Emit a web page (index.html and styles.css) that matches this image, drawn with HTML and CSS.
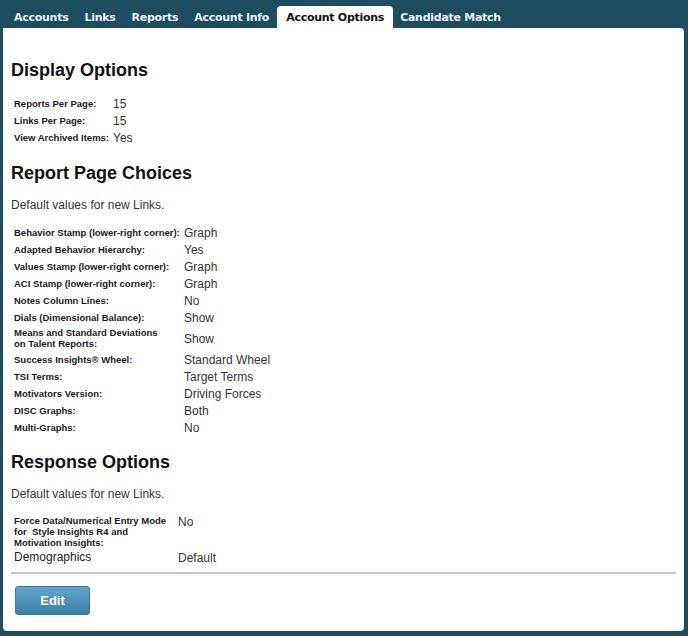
FILE: index.html
```html
<!DOCTYPE html>
<html>
<head>
<meta charset="utf-8">
<link rel="stylesheet" href="styles.css">
</head>
<body>
<nav class="tabs">
  <span class="tab">Accounts</span>
  <span class="tab">Links</span>
  <span class="tab">Reports</span>
  <span class="tab">Account Info</span>
  <span class="tab active">Account Options</span>
  <span class="tab">Candidate Match</span>
</nav>
<main class="panel">
  <h2 class="h first">Display Options</h2>
  <div class="opts display">
    <div class="row"><span class="lbl">Reports Per Page:</span><span class="val">15</span></div>
    <div class="row"><span class="lbl">Links Per Page:</span><span class="val">15</span></div>
    <div class="row"><span class="lbl">View Archived Items:</span><span class="val">Yes</span></div>
  </div>

  <h2 class="h rep">Report Page Choices</h2>
  <p class="note">Default values for new Links.</p>
  <div class="opts report">
    <div class="row"><span class="lbl">Behavior Stamp (lower-right corner):</span><span class="val">Graph</span></div>
    <div class="row"><span class="lbl">Adapted Behavior Hierarchy:</span><span class="val">Yes</span></div>
    <div class="row"><span class="lbl">Values Stamp (lower-right corner):</span><span class="val">Graph</span></div>
    <div class="row"><span class="lbl">ACI Stamp (lower-right corner):</span><span class="val">Graph</span></div>
    <div class="row"><span class="lbl">Notes Column Lines:</span><span class="val">No</span></div>
    <div class="row"><span class="lbl">Dials (Dimensional Balance):</span><span class="val">Show</span></div>
    <div class="row tall"><span class="lbl">Means and Standard Deviations<br>on Talent Reports:</span><span class="val">Show</span></div>
    <div class="row"><span class="lbl">Success Insights® Wheel:</span><span class="val">Standard Wheel</span></div>
    <div class="row"><span class="lbl">TSI Terms:</span><span class="val">Target Terms</span></div>
    <div class="row"><span class="lbl">Motivators Version:</span><span class="val">Driving Forces</span></div>
    <div class="row"><span class="lbl">DISC Graphs:</span><span class="val">Both</span></div>
    <div class="row"><span class="lbl">Multi-Graphs:</span><span class="val">No</span></div>
  </div>

  <h2 class="h resp">Response Options</h2>
  <p class="note resp-note">Default values for new Links.</p>
  <div class="opts response">
    <div class="row top"><span class="lbl">Force Data/Numerical Entry Mode<br>for&nbsp; Style Insights R4 and<br>Motivation Insights:</span><span class="val">No</span></div>
    <div class="row demo"><span class="lbl plain">Demographics</span><span class="val">Default</span></div>
  </div>
  <hr class="sep">
  <button class="btn" type="button">Edit</button>
</main>
</body>
</html>
```
FILE: styles.css
```css
html, body {
  margin: 0;
  padding: 0;
}
body {
  background: #1e4d60;
  width: 688px;
  height: 636px;
  overflow: hidden;
  font-family: "Liberation Sans", Arial, sans-serif;
  color: #222;
}
.tabs {
  display: flex;
  padding: 6px 0 0 6px;
  height: 22px;
}
.tab {
  font-family: "DejaVu Sans", Verdana, sans-serif;
  font-weight: bold;
  font-size: 11px;
  color: #eef3f6;
  padding: 1px 8px 0;
  line-height: 21px;
  letter-spacing: -0.27px;
}
.tab.active {
  background: #fff;
  color: #111;
  border-radius: 4px 4px 0 0;
  padding: 1px 9px 0;
}
.tab.active + .tab {
  padding-left: 7px;
}
.panel {
  background: #fff;
  margin: 0 4px 0 3px;
  height: 603px;
  box-sizing: border-box;
  border-radius: 0 4px 4px 4px;
  padding: 0 8px;
  overflow: hidden;
}
.h {
  font-size: 18px;
  font-weight: bold;
  line-height: 22px;
  margin: 16px 0 13px;
  color: #111;
}
.h.first {
  margin: 31px 0 14px;
}
.h.rep {
  margin-bottom: 14px;
}
.h.resp {
  margin: 15px 0 14px;
}
.note {
  font-size: 12px;
  line-height: 14px;
  margin: 0 0 12px;
  color: #333;
}
.note.resp-note {
  margin-bottom: 11px;
}
.opts {
  display: flex;
  flex-direction: column;
  padding-left: 3px;
}
.opts.display {
  margin-bottom: 1px;
}
.row {
  display: flex;
  align-items: center;
  height: 17px;
}
.row.tall {
  height: 25px;
}
.row.top {
  align-items: flex-start;
  height: auto;
  padding: 3px 0 2px;
}
.row.demo {
  height: 15px;
}
.lbl {
  font-size: 9.5px;
  font-weight: bold;
  line-height: 10.8px;
  color: #1a1a1a;
  flex: none;
  padding-top: 1px;
}
.lbl.plain {
  font-size: 12px;
  font-weight: normal;
  color: #222;
  padding-top: 0;
}
.val {
  font-size: 12px;
  line-height: 14px;
  color: #333;
}
.display .lbl { width: 99px; }
.report .lbl { width: 170px; }
.response .lbl { width: 164px; }
.sep {
  border: 0;
  border-top: 2px solid #c4c4c4;
  margin: 7px 0 0;
  height: 0;
}
.btn {
  display: block;
  margin: 12px 0 0 4px;
  width: 75px;
  height: 29px;
  border: 1px solid #3a779c;
  border-radius: 3px;
  background: linear-gradient(#62a6cd, #3b7fa7);
  color: #fff;
  font-family: "Liberation Sans", Arial, sans-serif;
  font-weight: bold;
  font-size: 13px;
  padding: 0;
}
```
